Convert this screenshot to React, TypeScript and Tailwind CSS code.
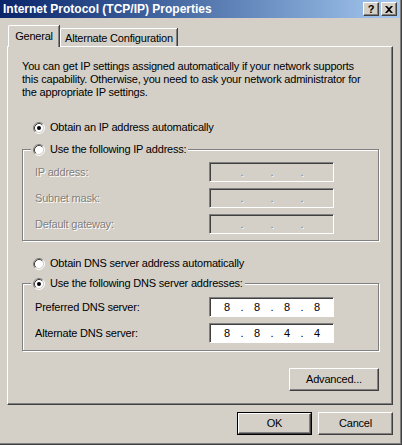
import { Fragment, ReactNode } from 'react'

const FACE = 'bg-[#d4d0c8]'

function Radio({ checked }: { checked?: boolean }) {
  return (
    <svg width="12" height="12" viewBox="0 0 12 12" className="shrink-0">
      <circle cx="6" cy="6" r="4.5" fill="#fff" />
      <path d="M2.11 9.89 A5.5 5.5 0 0 1 9.89 2.11" fill="none" stroke="#808080" />
      <path d="M9.89 2.11 A5.5 5.5 0 0 1 2.11 9.89" fill="none" stroke="#fff" />
      <path d="M2.82 9.18 A4.5 4.5 0 0 1 9.18 2.82" fill="none" stroke="#404040" />
      <path d="M9.18 2.82 A4.5 4.5 0 0 1 2.82 9.18" fill="none" stroke="#d4d0c8" />
      {checked && <circle cx="6" cy="6" r="2" fill="#000" />}
    </svg>
  )
}

function RadioLabel({ checked, children }: { checked?: boolean; children: ReactNode }) {
  return (
    <div className="flex items-center gap-[5px] h-[13px]">
      <Radio checked={checked} />
      <span className="whitespace-nowrap">{children}</span>
    </div>
  )
}

function IpField({ parts, disabled }: { parts?: string[]; disabled?: boolean }) {
  const vals = parts ?? ['', '', '', '']
  return (
    <div
      className={`w-[125px] h-[20px] flex items-center pl-[5px] border border-t-[#808080] border-l-[#808080] border-r-white border-b-white shadow-[inset_1px_1px_0_#404040] ${
        disabled ? 'bg-[#d4d0c8] text-[#808080] [text-shadow:1px_1px_0_#fff]' : 'bg-white text-black'
      }`}
    >
      {vals.map((v, i) => (
        <Fragment key={i}>
          <span className="w-[24px] text-center">{v}</span>
          {i < 3 && <span className="w-[6px] text-center">.</span>}
        </Fragment>
      ))}
    </div>
  )
}

function Field({ label, parts, disabled }: { label: string; parts?: string[]; disabled?: boolean }) {
  return (
    <div className="flex items-center h-[20px]">
      <span className={`w-[174px] ${disabled ? 'text-[#808080] [text-shadow:1px_1px_0_#fff]' : ''}`}>{label}</span>
      <IpField parts={parts} disabled={disabled} />
    </div>
  )
}

function GroupBox({ legend, children, className }: { legend: ReactNode; children: ReactNode; className?: string }) {
  return (
    <div className={`relative border border-[#808080] shadow-[1px_1px_0_#fff,inset_1px_1px_0_#fff] ${className ?? ''}`}>
      <div className={`absolute -top-[7px] left-[8px] pl-[2px] pr-[2px] ${FACE}`}>{legend}</div>
      {children}
    </div>
  )
}

function Button({ children, width, isDefault }: { children: ReactNode; width: string; isDefault?: boolean }) {
  return (
    <div className={`${width} h-[23px] ${isDefault ? 'border border-black' : ''}`}>
      <div className="w-full h-full flex items-center justify-center border border-t-white border-l-white border-r-[#404040] border-b-[#404040] shadow-[inset_-1px_-1px_0_#808080]">
        {children}
      </div>
    </div>
  )
}

function TitleButton({ children }: { children: ReactNode }) {
  return (
    <div className={`w-[16px] h-[14px] flex items-center justify-center ${FACE} border border-t-white border-l-white border-r-[#404040] border-b-[#404040] shadow-[inset_-1px_-1px_0_#808080]`}>
      {children}
    </div>
  )
}

export default function App() {
  return (
    <div className="w-[402px] h-[445px] bg-[#d4d0c8] flex flex-col font-['Liberation_Sans',Arial,sans-serif] text-[11px] leading-[13px] tracking-[-0.2px] text-black shadow-[inset_-1px_-1px_0_#404040,inset_-2px_-2px_0_#808080]">
      {/* Title bar */}
      <div className="h-[18px] mr-[2px] flex items-center justify-between pl-[3px] pr-[3px] bg-gradient-to-r from-[#0a246a] to-[#a6caf0]">
        <span className="text-white font-bold text-[12px] tracking-normal whitespace-nowrap">Internet Protocol (TCP/IP) Properties</span>
        <div className="flex gap-[2px]">
          <TitleButton>
            <span className="font-bold text-[11px] leading-none">?</span>
          </TitleButton>
          <TitleButton>
            <svg width="8" height="7" viewBox="0 0 8 7">
              <path d="M0 0h2l2 2 2-2h2L5 3.5 8 7H6L4 5 2 7H0l3-3.5z" fill="#000" />
            </svg>
          </TitleButton>
        </div>
      </div>

      {/* Tabs */}
      <div className="mt-[7px] ml-[8px] h-[21px] flex items-end">
        <div className={`relative z-10 -mb-px w-[51px] h-[22px] pt-[4px] text-center ${FACE} border-l border-t border-white rounded-tl-[2px] shadow-[1px_0_0_#404040,inset_-1px_0_0_#808080]`}>
          General
        </div>
        <div className={`ml-[1px] w-[117px] h-[18px] pt-[3px] text-center ${FACE} border-l border-t border-white rounded-tl-[2px] shadow-[1px_0_0_#404040,inset_-1px_0_0_#808080]`}>
          Alternate Configuration
        </div>
      </div>

      {/* Panel */}
      <div className="ml-[7px] w-[386px] h-[359px] border border-t-white border-l-white border-r-[#404040] border-b-[#404040] shadow-[inset_-1px_-1px_0_#808080] flex flex-col">
        <p className="ml-[14px] mt-[13px] whitespace-nowrap">
          You can get IP settings assigned automatically if your network supports
          <br />
          this capability. Otherwise, you need to ask your network administrator for
          <br />
          the appropriate IP settings.
        </p>

        <div className="ml-[25px] mt-[22px]">
          <RadioLabel checked>Obtain an IP address automatically</RadioLabel>
        </div>

        <GroupBox
          className="ml-[14px] mt-[15px] w-[357px] pt-[12px] pb-[6px] pl-[12px]"
          legend={<RadioLabel>Use the following IP address:</RadioLabel>}
        >
          <div className="flex flex-col gap-[6px]">
            <Field label="IP address:" disabled />
            <Field label="Subnet mask:" disabled />
            <Field label="Default gateway:" disabled />
          </div>
        </GroupBox>

        <div className="ml-[25px] mt-[16px]">
          <RadioLabel>Obtain DNS server address automatically</RadioLabel>
        </div>

        <GroupBox
          className="ml-[14px] mt-[13px] w-[357px] pt-[13px] pb-[7px] pl-[12px]"
          legend={<RadioLabel checked>Use the following DNS server addresses:</RadioLabel>}
        >
          <div className="flex flex-col gap-[6px]">
            <Field label="Preferred DNS server:" parts={['8', '8', '8', '8']} />
            <Field label="Alternate DNS server:" parts={['8', '8', '4', '4']} />
          </div>
        </GroupBox>

        <div className="mt-[17px] ml-[281px]">
          <Button width="w-[90px]">Advanced...</Button>
        </div>
      </div>

      {/* Dialog buttons */}
      <div className="mt-[7px] pr-[9px] flex justify-end gap-[6px]">
        <Button width="w-[75px]" isDefault>
          OK
        </Button>
        <Button width="w-[75px]">Cancel</Button>
      </div>
    </div>
  )
}
